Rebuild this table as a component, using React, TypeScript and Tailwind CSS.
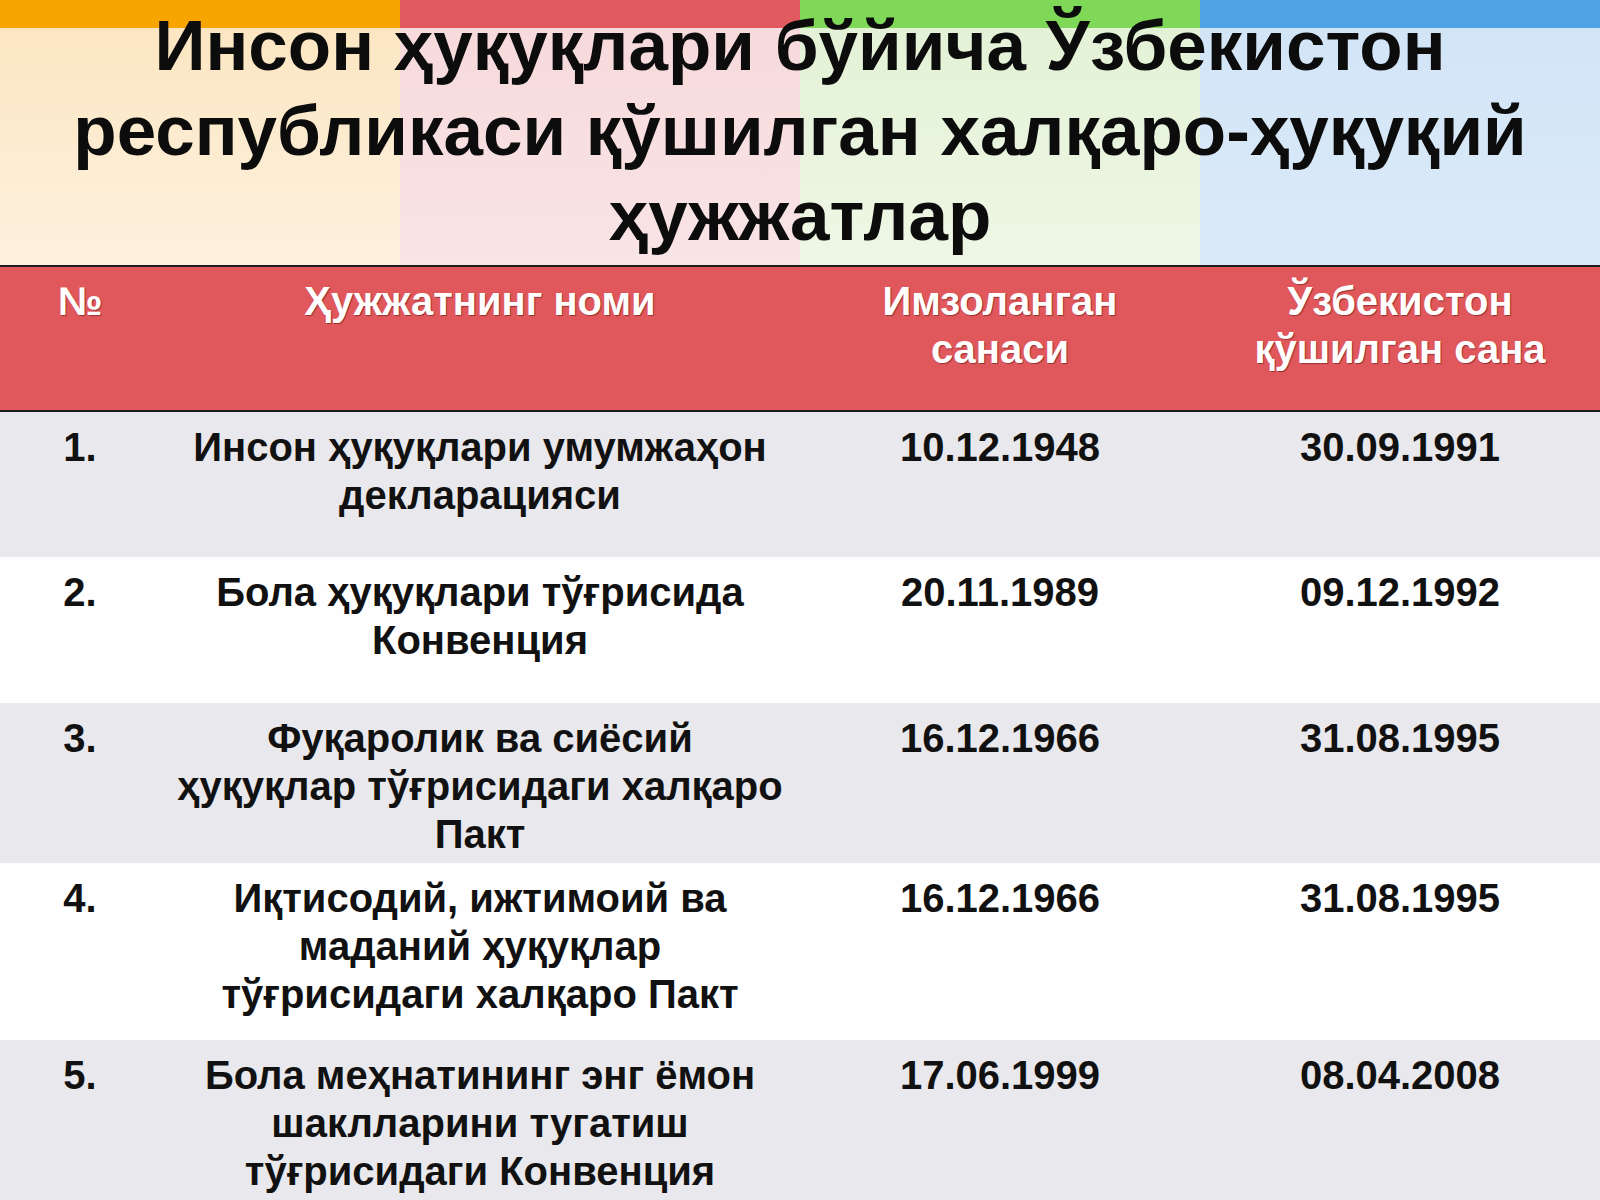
import React from 'react';

const bands = [
  { bar: 'bg-[#f8a502]', tint: 'bg-gradient-to-b from-[#fce6c2] to-[#fdf1de]' },
  { bar: 'bg-[#e05a5f]', tint: 'bg-gradient-to-b from-[#f7dadb] to-[#f9e4e6]' },
  { bar: 'bg-[#7fd858]', tint: 'bg-gradient-to-b from-[#e3f2d6] to-[#eef7e6]' },
  { bar: 'bg-[#4fa3e7]', tint: 'bg-gradient-to-b from-[#d2e5f7] to-[#dbeaf8]' },
];

const rows = [
  {
    n: '1.',
    name: ['Инсон ҳуқуқлари умумжаҳон', 'декларацияси'],
    signed: '10.12.1948',
    joined: '30.09.1991',
    h: 'h-[145px]',
    bg: 'bg-[#e9e8ec]',
  },
  {
    n: '2.',
    name: ['Бола ҳуқуқлари тўғрисида', 'Конвенция'],
    signed: '20.11.1989',
    joined: '09.12.1992',
    h: 'h-[146px]',
    bg: 'bg-[#fefefe]',
  },
  {
    n: '3.',
    name: ['Фуқаролик ва сиёсий', 'ҳуқуқлар тўғрисидаги халқаро', 'Пакт'],
    signed: '16.12.1966',
    joined: '31.08.1995',
    h: 'h-[160px]',
    bg: 'bg-[#e9e8ec]',
  },
  {
    n: '4.',
    name: ['Иқтисодий, ижтимоий ва', 'маданий ҳуқуқлар', 'тўғрисидаги халқаро Пакт'],
    signed: '16.12.1966',
    joined: '31.08.1995',
    h: 'h-[177px]',
    bg: 'bg-[#fefefe]',
  },
  {
    n: '5.',
    name: ['Бола меҳнатининг энг ёмон', 'шаклларини тугатиш', 'тўғрисидаги Конвенция'],
    signed: '17.06.1999',
    joined: '08.04.2008',
    h: 'h-[160px]',
    bg: 'bg-[#e9e8ec]',
  },
];

const Lines = ({ lines }: { lines: string[] }) => (
  <div>
    {lines.map((l, i) => (
      <div key={i} className="whitespace-nowrap">
        {l}
      </div>
    ))}
  </div>
);

export default function App() {
  return (
    <div className="w-[1600px] h-[1200px] overflow-hidden bg-white font-['Liberation_Sans',Arial,sans-serif] font-bold text-[#111]">
      <header className="relative h-[265px]">
        <div className="absolute inset-0 grid grid-cols-4">
          {bands.map((b, i) => (
            <div key={i} className="flex flex-col">
              <div className={`h-[28px] ${b.bar}`} />
              <div className={`flex-1 ${b.tint}`} />
            </div>
          ))}
        </div>
        <h1 className="relative pt-[3px] text-center text-[71px] leading-[85px] text-[#0c0c0c]">
          <div>Инсон ҳуқуқлари бўйича Ўзбекистон</div>
          <div>республикаси қўшилган халқаро-ҳуқуқий</div>
          <div>ҳужжатлар</div>
        </h1>
      </header>

      <div className="h-[2px] bg-[#1d1d1d]" />

      <div className="grid h-[143px] grid-cols-[160px_640px_400px_400px] bg-[#e0585c] pt-[10px] text-center text-[40px] leading-[48px] text-white [text-shadow:1px_1px_1px_rgba(60,0,0,0.45)]">
        <div>№</div>
        <div>Ҳужжатнинг номи</div>
        <Lines lines={['Имзоланган', 'санаси']} />
        <Lines lines={['Ўзбекистон', 'қўшилган сана']} />
      </div>

      <div className="h-[2px] bg-[#1d1d1d]" />

      {rows.map((r) => (
        <div
          key={r.n}
          className={`grid grid-cols-[160px_640px_400px_400px] pt-[11px] text-center text-[40px] leading-[48px] ${r.h} ${r.bg}`}
        >
          <div>{r.n}</div>
          <Lines lines={r.name} />
          <div>{r.signed}</div>
          <div>{r.joined}</div>
        </div>
      ))}
    </div>
  );
}
